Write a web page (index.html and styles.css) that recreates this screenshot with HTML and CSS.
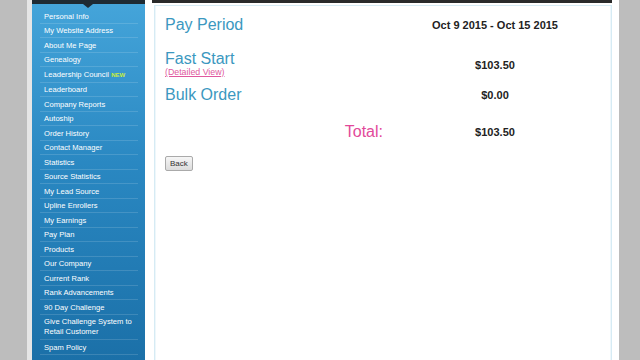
FILE: index.html
```html
<!DOCTYPE html>
<html lang="en">
<head>
    <meta charset="UTF-8">
    <title>Pay Period</title>
    <link rel="stylesheet" href="styles.css">
</head>
<body>
    <div class="page">
        <div class="sidebar">
            <div class="sidebar-top"></div>
            <ul class="menu">
                <li>Personal Info</li>
                <li>My Website Address</li>
                <li>About Me Page</li>
                <li>Genealogy</li>
                <li>Leadership Council <span class="new">NEW</span></li>
                <li>Leaderboard</li>
                <li>Company Reports</li>
                <li>Autoship</li>
                <li>Order History</li>
                <li>Contact Manager</li>
                <li>Statistics</li>
                <li>Source Statistics</li>
                <li>My Lead Source</li>
                <li>Upline Enrollers</li>
                <li>My Earnings</li>
                <li>Pay Plan</li>
                <li>Products</li>
                <li>Our Company</li>
                <li>Current Rank</li>
                <li>Rank Advancements</li>
                <li>90 Day Challenge</li>
                <li class="two-line">Give Challenge System to Retail Customer</li>
                <li>Spam Policy</li>
            </ul>
        </div>

        <div class="main">
            <div class="main-top"></div>
            <div class="box">
                <div class="pay-grid">
                    <div class="title">Pay Period</div>
                    <div class="amount">Oct 9 2015 - Oct 15 2015</div>

                    <div class="title row-gap">Fast Start
                        <a class="detail" href="#">(Detailed View)</a>
                    </div>
                    <div class="amount first-amount">$103.50</div>

                    <div class="title">Bulk Order</div>
                    <div class="amount">$0.00</div>

                    <div class="total">Total:</div>
                    <div class="amount total-amount">$103.50</div>
                </div>
                <button class="back">Back</button>
            </div>
        </div>
    </div>
</body>
</html>
```

FILE: styles.css
```css
body {
    margin: 0;
    padding: 0;
    background: #bdbdbd;
    font-family: "Liberation Sans", Arial, sans-serif;
    height: 360px;
    overflow: hidden;
}

.page {
    display: flex;
    margin-left: 27px;
    width: 592px;
    height: 360px;
    background: #fff;
    border-left: 5px solid #e6e6e6;
    box-sizing: border-box;
}

/* левое меню */
.sidebar {
    width: 113px;
    flex-shrink: 0;
    background: linear-gradient(180deg, #45a5da 0%, #2a88c2 45%, #1b70a8 100%);
    position: relative;
}

.sidebar-top {
    height: 4px;
    background: #1e2a33;
}

.sidebar-top::after {
    content: '';
    position: absolute;
    left: 51px;
    top: 4px;
    border-left: 5px solid transparent;
    border-right: 5px solid transparent;
    border-top: 4px solid #1e2a33;
}

.menu {
    list-style: none;
    margin: 5px 0 0 0;
    padding: 0 7px 0 8px;
}

.menu li {
    color: #fff;
    font-size: 7.6px;
    line-height: 9px;
    padding: 2.5px 0 2px 4px;
    border-bottom: 1px solid rgba(255,255,255,0.14);
}

.menu .two-line {
    line-height: 10px;
}

.new {
    color: #c9ee3a;
    font-weight: bold;
    font-size: 6px;
}

/* контент */
.main {
    flex: 1;
    padding: 0 7px 0 2px;
}

.main-top {
    height: 3px;
    margin-left: 5px;
    background: #2a2a2a;
}

.box {
    margin: 2px 0 0 7px;
    height: 400px;
    border: 1px solid #d6ebf4;
    box-shadow: inset 1px 0 0 #eef7fb, inset -1px 0 0 #eef7fb;
    padding: 7px 10px 0 10px;
}

.pay-grid {
    display: grid;
    grid-template-columns: 231px 198px;
    align-items: center;
}

.title {
    color: #3b98c0;
    font-size: 16px;
    line-height: 24px;
}

.row-gap {
    margin-top: 10px;
}

.detail {
    display: block;
    color: #e0589e;
    font-size: 8.8px;
    line-height: 7px;
    margin-top: -2px;
    margin-bottom: 7px;
}

.amount {
    text-align: center;
    font-weight: bold;
    font-size: 11px;
    color: #222;
}

.first-amount {
    align-self: start;
    margin-top: 22px;
}

.total {
    color: #e2499a;
    font-size: 16px;
    text-align: right;
    padding-right: 13px;
    margin-top: 13px;
    line-height: 24px;
}

.total-amount {
    margin-top: 13px;
}

.back {
    margin-top: 12px;
    font-family: "Liberation Sans", Arial, sans-serif;
    font-size: 8px;
    color: #333;
    background: linear-gradient(#f6f6f6, #dcdcdc);
    border: 1px solid #aaa;
    border-radius: 2px;
    padding: 2px 4px;
    height: 15px;
}
```
